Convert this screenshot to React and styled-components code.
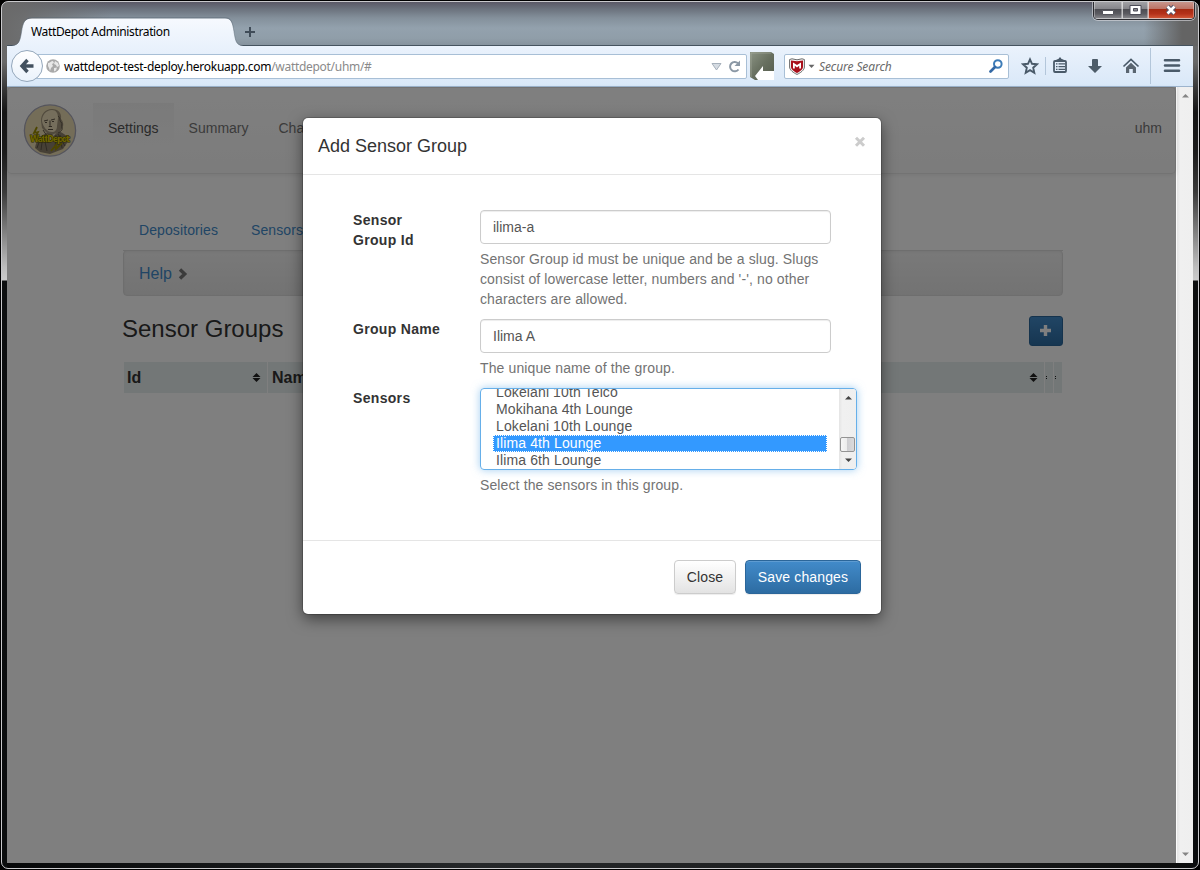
import React from "react";
import styled, { createGlobalStyle, css } from "styled-components";

const GlobalStyle = createGlobalStyle`
  *, *::before, *::after { box-sizing: border-box; }
  body { margin: 0; background: #000; overflow: hidden; }
`;

const sans = `"Liberation Sans", Arial, sans-serif`;
const chromeFont = `"Noto Sans", "Open Sans", sans-serif`;

/* ---------- window frame ---------- */

const Desktop = styled.div`
  width: 1200px;
  height: 870px;
  padding: 1px;
  background: #000;
  font-family: ${sans};
  font-size: 14px;
  line-height: 20px;
  color: #333;
`;

const sideGlass = `linear-gradient(180deg, #6b6b6b 0, #686868 60px, #3a3a3a 85px, #151515 110px, #1c1c1c 150px, #3a3a3a 190px, #bdbdbd 265px, #cbcbcb 278px, #0d0f10 279px, #0b0d0e 100%)`;

const Frame = styled.div`
  display: flex;
  flex-direction: column;
  width: 1198px;
  height: 868px;
  padding: 0 5px 5px;
  border: 1px solid #c9c9cc;
  border-radius: 7px;
  overflow: hidden;
  background:
    linear-gradient(90deg, rgba(106, 106, 106, 1) 0, rgba(106, 106, 106, 0.9) 20px, rgba(106, 106, 106, 0) 110px, rgba(106, 106, 106, 0) 1142px, rgba(100, 100, 100, 1) 1180px) 0 0 / 100% 44px no-repeat,
    linear-gradient(180deg, #5a5966 0, #6b727d 7px, #84909b 16px, #93a1ad 26px, #909ea9 36px, #84919c 44px) 0 0 / 100% 44px no-repeat,
    ${sideGlass} 0 0 / 5px 100% no-repeat,
    ${sideGlass} 100% 0 / 5px 100% no-repeat,
    linear-gradient(90deg, #060708, #26282a 40%, #1a1b1c 80%, #0b0c0c);
`;

const TitleBar = styled.div`
  display: flex;
  height: 44px;
  flex: none;
  align-items: flex-end;
  border-bottom: 1px solid #45535f;
`;

const Tab = styled.div`
  position: relative;
  width: 231px;
  height: 29px;
  margin: 0 0 -1px 5px;
  padding: 5px 0 0 19px;
  font: 12px/20px ${chromeFont};
  letter-spacing: -0.36px;
  color: #000;
`;

const TabShape = styled.svg`
  position: absolute;
  inset: 0;
`;

const TabTitle = styled.span`
  position: relative;
  white-space: nowrap;
`;

const NewTab = styled.svg`
  margin: 0 0 7px 1px;
`;

const WindowControls = styled.div`
  display: flex;
  align-self: flex-start;
  height: 19px;
  margin: -1px -2px 0 auto;
  border: 1px solid #2b2b30;
  border-top: 0;
  border-radius: 0 0 5px 5px;
  box-shadow: 0 0 0 1px rgba(220, 220, 225, 0.6);
  overflow: hidden;
`;

const ControlButton = styled.div`
  display: flex;
  align-items: center;
  justify-content: center;
  width: ${(p) => p.$w}px;
  border: 1px solid rgba(255, 255, 255, 0.35);
  border-top: 0;
  background: ${(p) =>
    p.$close
      ? "linear-gradient(180deg, #c99b92 0, #bd7466 45%, #a62a12 50%, #b4311a 75%, #cf5536 100%)"
      : "linear-gradient(180deg, #a5a5a9 0, #86868b 45%, #4d4d53 50%, #5b5b61 75%, #85858a 100%)"};
  & + & { border-left-color: rgba(240, 240, 240, 0.7); }
`;

/* ---------- toolbar ---------- */

const Toolbar = styled.div`
  display: flex;
  align-items: center;
  flex: none;
  height: 41px;
  padding-left: 4px;
  border-bottom: 1px solid #9db4cd;
  background: linear-gradient(180deg, #eaf2fc 0, #e2edfa 50%, #d9e8f8 100%);
`;

const BackButton = styled.div`
  position: relative;
  display: flex;
  align-items: center;
  justify-content: center;
  width: 32px;
  height: 32px;
  border: 1px solid #94a7bb;
  border-radius: 50%;
  background: linear-gradient(180deg, #fff, #eaf2fb);
`;

const Field = styled.div`
  display: flex;
  align-items: center;
  height: 25px;
  border: 1px solid #a8bfd6;
  border-radius: 2px;
  background: #fff;
  font: 12px/22px ${chromeFont};
  white-space: nowrap;
`;

const UrlField = styled(Field)`
  width: 712px;
  margin-left: -8px;
  padding: 0 5px 0 10px;
`;

const Url = styled.span`
  flex: 1;
  margin: 2px 0 0 4px;
  letter-spacing: -0.3px;
  color: #8a8a8a;
  b {
    font-weight: 400;
    letter-spacing: -0.26px;
    color: #000;
  }
`;

const SearchField = styled(Field)`
  width: 225px;
  margin-left: 10px;
  padding: 0 5px 0 4px;
`;

const SearchHint = styled.span`
  flex: 1;
  margin: 2px 0 0 4px;
  font-style: italic;
  letter-spacing: -0.1px;
  color: #6a6a6a;
`;

const Icon = styled.svg`
  display: block;
  flex: none;
  margin-left: ${(p) => p.$ml || 0}px;
`;

const Separator = styled.div`
  width: 1px;
  height: ${(p) => p.$h}px;
  margin-left: ${(p) => p.$ml}px;
  background: #b3c6da;
`;

/* ---------- web page ---------- */

const Viewport = styled.div`
  display: flex;
  height: 776px;
`;

const Page = styled.div`
  position: relative;
  width: 1169px;
  background: #fff;
`;

const Navbar = styled.div`
  display: flex;
  align-items: center;
  height: 87px;
  padding: 0 13px 0 15px;
  border: 1px solid #e7e7e7;
  border-radius: 4px;
  background: linear-gradient(180deg, #fff, #f8f8f8);
  box-shadow: 0 1px 5px rgba(0, 0, 0, 0.075);
`;

const NavItem = styled.div`
  padding: 15px;
  margin: 0 0 5px;
  margin-left: ${(p) => (p.$right ? "auto" : p.$first ? "16px" : "0")};
  padding-right: ${(p) => (p.$right ? 0 : 15)}px;
  color: ${(p) => (p.$active ? "#555" : "#777")};
  ${(p) =>
    p.$active &&
    css`
      background: linear-gradient(180deg, #f5f5f5, #fbfbfb);
    `}
`;

const Container = styled.div`
  width: 940px;
  margin: 36px 0 0 116px;
`;

const Tabs = styled.div`
  display: flex;
  height: 41px;
  border-bottom: 1px solid #ddd;
  letter-spacing: 0.1px;
`;

const TabLink = styled.div`
  padding: 10px 17px 10px 16px;
  margin-left: ${(p) => p.$ml || 0}px;
  color: #428bca;
`;

const Well = styled.div`
  display: flex;
  align-items: center;
  gap: 6px;
  height: 46px;
  margin-top: -1px;
  padding: 1px 15px 0;
  border: 1px solid #dcdcdc;
  border-radius: 4px;
  background: linear-gradient(180deg, #f3f3f3, #e6e6e6);
  box-shadow: inset 0 1px 3px rgba(0, 0, 0, 0.05);
  font-size: 16px;
  color: #428bca;
`;

const SectionHead = styled.div`
  display: flex;
  align-items: center;
  justify-content: space-between;
  height: 30px;
  margin-top: 20px;
`;

const Heading = styled.h3`
  margin: 0 0 4px -1px;
  font-size: 24px;
  font-weight: 400;
  line-height: 26px;
`;

const AddButton = styled.div`
  display: flex;
  align-items: center;
  justify-content: center;
  width: 34px;
  height: 30px;
  border: 1px solid #2b669a;
  border-radius: 3px;
  background: linear-gradient(180deg, #428bca, #2d6ca2);
`;

const HeaderRow = styled.div`
  display: grid;
  grid-template-columns: 143px 776px 8px 8px;
  gap: 0 1px;
  height: 31px;
  margin: 16px 1px 0;
`;

const HeaderCell = styled.div`
  display: flex;
  align-items: center;
  justify-content: space-between;
  padding: ${(p) => (p.$narrow ? "0 0 0 1px" : "0 6px 0 4px")};
  background: #e6eeee;
  font-size: 16px;
  font-weight: 700;
  &:first-child { padding-left: 3px; }
`;

/* ---------- modal ---------- */

const Backdrop = styled.div`
  position: absolute;
  inset: 0;
  display: flex;
  justify-content: center;
  align-items: flex-start;
  padding: 31px 0 0 1px;
  background: rgba(0, 0, 0, 0.5);
`;

const Modal = styled.div`
  width: 578px;
  height: 496px;
  border-radius: 5px;
  background: #fff;
  box-shadow: 0 0 0 1px rgba(0, 0, 0, 0.18), 0 5px 15px rgba(0, 0, 0, 0.5);
`;

const ModalHeader = styled.div`
  display: flex;
  justify-content: space-between;
  height: 57px;
  padding: 15px 15px 0;
  border-bottom: 1px solid #e5e5e5;
  font-size: 18px;
  line-height: 26px;
`;

const ModalBody = styled.div`
  height: 365px;
  padding: 35px 24px 0 50px;
`;

const FormRow = styled.div`
  display: grid;
  grid-template-columns: 97px 377px;
  column-gap: 30px;
`;

const Label = styled.label`
  padding-right: ${(p) => (p.$wrap ? 30 : 0)}px;
  font-weight: 700;
  letter-spacing: 0.32px;
`;

const Input = styled.input`
  display: block;
  width: 351px;
  height: 34px;
  padding: 6px 12px;
  border: 1px solid #ccc;
  border-radius: 4px;
  outline: 0;
  font: 14px/20px ${sans};
  color: #555;
  box-shadow: inset 0 1px 1px rgba(0, 0, 0, 0.075);
`;

const HelpText = styled.p`
  width: 351px;
  margin: 5px 0 10px;
  letter-spacing: 0.12px;
  color: #737373;
`;

const ListBox = styled.div`
  display: flex;
  width: 377px;
  height: 82px;
  border: 1px solid #66afe9;
  border-radius: 4px;
  overflow: hidden;
  box-shadow: 0 0 8px rgba(102, 175, 233, 0.6);
`;

const Options = styled.div`
  display: flex;
  flex-direction: column;
  justify-content: flex-end;
  width: 358px;
  padding: 0 12px 0 12px;
  letter-spacing: 0.12px;
  overflow: hidden;
`;

const Option = styled.div`
  flex: none;
  height: 17px;
  padding-left: 3px;
  line-height: 17px;
  color: ${(p) => (p.$selected ? "#fff" : "#555")};
  background: ${(p) => (p.$selected ? "#3399ff" : "transparent")};
  outline: ${(p) => (p.$selected ? "1px dotted #fff" : "0")};
  outline-offset: -1px;
`;

const ScrollTrack = styled.div`
  display: flex;
  flex-direction: column;
  align-items: center;
  width: 17px;
  background: linear-gradient(90deg, #e4e4e4, #f0f0f0 20%, #efefef);
`;

const ListScroll = styled(ScrollTrack)`
  padding: 6px 0 6px 1px;
  justify-content: space-between;
`;

const PageScroll = styled(ScrollTrack)`
  padding: 6px 0 6px;
  border-left: 1px solid #fafafa;
  justify-content: space-between;
`;

const Thumb = styled.div`
  width: 15px;
  height: 15px;
  margin: 30px 1px 0 0;
  border: 1px solid #939393;
  border-radius: 2px;
  background: linear-gradient(90deg, #f6f6f6 0, #ececec 45%, #cfcfd2 50%, #dadadc 100%);
`;

const ModalFooter = styled.div`
  display: flex;
  justify-content: flex-end;
  gap: 9px;
  padding: 19px 20px 0;
  border-top: 1px solid #e5e5e5;
`;

const Button = styled.button`
  width: ${(p) => p.$w}px;
  height: 34px;
  padding: 0;
  border: 1px solid ${(p) => (p.$primary ? "#2b669a" : "#ccc")};
  border-radius: 4px;
  background: ${(p) =>
    p.$primary ? "linear-gradient(180deg, #428bca, #2d6ca2)" : "linear-gradient(180deg, #fff, #e3e3e3)"};
  box-shadow: inset 0 1px 0 rgba(255, 255, 255, 0.15), 0 1px 1px rgba(0, 0, 0, 0.075);
  font: 14px/20px ${sans};
  letter-spacing: 0.13px;
  color: ${(p) => (p.$primary ? "#fff" : "#333")};
`;

/* ---------- drawings ---------- */

const Arrow = ({ down, color = "#444" }) => (
  <Icon width="9" height="5" viewBox="0 0 9 5">
    <path d={down ? "M1 .5h7L4.5 4z" : "M1 4.5h7L4.5 1z"} fill={color} />
  </Icon>
);

const SortIcon = () => (
  <svg width="9" height="9" viewBox="0 0 9 9">
    <path d="M4.500 0 8.500 4h-8zM.5 5h8l-4 4z" fill="#222" />
  </svg>
);

const SortStub = () => (
  <svg width="2" height="5" viewBox="0 0 2 5">
    <path d="M0 1h1v1H0zM0 3h1v1H0z" fill="#222" />
  </svg>
);

const Logo = () => (
  <Icon width="54" height="54" viewBox="0 0 54 54">
    <circle cx="27" cy="26.500" r="25.600" fill="#e9dab1" stroke="#a9a9b8" strokeWidth="1.300" />
    <path d="M12 44c1-8 6-13 12-15l11-2c5 2 9 4 11 9l-6 9-13 5-10-2z" fill="#8c816b" />
    <path d="M18 17c0-7 4-12 11-12 6 0 10 4 9 10 3 3 3 8 0 11l-5 5-9-2-5-5z" fill="#a2957b" />
    <path d="M19 17c0-6 4-11 10-11 4 0 6 3 6 8l-1 8c0 4-2 6-5 6-5 0-9-5-10-11z" fill="#eadcb8" />
    <path d="m21 17 4-1m3 0 4-1M22 18.500h2m5-1h2m-4-1v5l-1 1h3m-4 3h5" stroke="#5e5545" fill="none" />
    <path d="M35 12c3 2 1 4 3 6s0 4 1 6-2 4-4 5M20 26l4 6 5-1M18 33l-4 11m6-13-2 15m3-13 3 14m11-17 7 12M33 31l-1 13m5-13 2 13" stroke="#5f5647" fill="none" />
    <path d="m24 30 3 7 6-8-4 2z" fill="#eadcb8" />
    <path d="m14 23-3 6 4-1-3 6m27 5-6 6v-4l-5 6" stroke="#9b8c00" strokeWidth="1.800" fill="none" />
    <text x="7" y="38" textLength="40" fontFamily="DejaVu Sans, sans-serif" fontSize="8.500" fontWeight="700" fill="#dccb00" stroke="#5a5200" strokeWidth="1" paintOrder="stroke">WattDepot</text>
  </Icon>
);

const ink = "#4a5a69";

export default function App() {
  return (
    <Desktop>
      <GlobalStyle />
      <Frame>
        <TitleBar>
          <Tab>
            <TabShape width="231" height="29" viewBox="0 0 231 29">
              <defs>
                <linearGradient id="tab" x1="0" y1="0" x2="0" y2="1">
                  <stop offset="0" stopColor="#f6f9fe" />
                  <stop offset="1" stopColor="#eaf2fc" />
                </linearGradient>
              </defs>
              <path d="M0 29C7 28.500 8 24 9.500 15 11 5 13 1.500 20 1.500H213c6 0 7.500 4 9 13 1.500 9 2 14 9 14.500z" fill="url(#tab)" />
              <path d="M0 28.500C7 28 8 24 9.500 15 11 5 13 .7 20 .7H213c6 0 7.500 4 9 14 1.500 9 2 13.500 9 13.800" fill="none" stroke="#596875" strokeWidth=".7" opacity=".7" />
            </TabShape>
            <TabTitle>WattDepot Administration</TabTitle>
          </Tab>
          <NewTab width="12" height="12" viewBox="0 0 12 12">
            <path d="M6 1v10M1 6h10" stroke="#404c58" strokeWidth="2" />
          </NewTab>
          <WindowControls>
            <ControlButton $w={28}>
              <svg width="12" height="12" viewBox="0 0 12 12">
                <path d="M.5 6.500h11v4H.5z" fill="#fff" stroke="#55555d" />
              </svg>
            </ControlButton>
            <ControlButton $w={26}>
              <svg width="13" height="12" viewBox="0 0 13 12">
                <path d="M1 1.500h11v9H1z" fill="#fff" stroke="#4d4d58" />
                <path d="M4.500 4.500h4v2.500h-4z" fill="#88888d" stroke="#4d4d58" />
              </svg>
            </ControlButton>
            <ControlButton $w={46} $close>
              <svg width="14" height="12" viewBox="0 0 14 12">
                <path d="m3.500 2.500 7 7m0-7-7 7" stroke="#56566a" strokeWidth="4.600" />
                <path d="m3.500 2.500 7 7m0-7-7 7" stroke="#fff" strokeWidth="2.600" />
              </svg>
            </ControlButton>
          </WindowControls>
        </TitleBar>

        <Toolbar>
          <BackButton>
            <svg width="16" height="16" viewBox="0 0 16 16">
              <path d="M8.500 2 3 8l5.500 6M3 8h11.500" fill="none" stroke="#43515f" strokeWidth="3.400" />
            </svg>
          </BackButton>
          <UrlField>
            <Icon width="14" height="14" viewBox="0 0 14 14">
              <circle cx="7" cy="7" r="6.800" fill="#a9a9a9" />
              <path d="M2 4c2 0 3-2 5-2l1 2-2 1 1 2-2 2-1 3-1-3-1-2zM9 2l3 2 1 3-2 1-1-2-2-1zM8 9l3-.5-1 3-2 1z" fill="#e8e8e8" />
            </Icon>
            <Url>
              <b>wattdepot-test-deploy.herokuapp.com</b>/wattdepot/uhm/#
            </Url>
            <Icon width="11" height="9" viewBox="0 0 11 9">
              <path d="M1 1.500h9L5.500 8z" fill="#d5dbe2" stroke="#a6b0bb" />
            </Icon>
            <Icon $ml={6} width="13" height="13" viewBox="0 0 13 13">
              <path d="M10 3.200A4.700 4.700 0 1 0 10.500 9.500" fill="none" stroke="#8b98a5" strokeWidth="2" />
              <path d="M12 .5V6H6.500z" fill="#8b98a5" />
            </Icon>
          </UrlField>
          <Icon $ml={3} width="24" height="28" viewBox="0 0 24 28">
            <defs>
              <linearGradient id="ext" x1="0" y1="0" x2="1" y2="1">
                <stop offset="0" stopColor="#8b9384" />
                <stop offset=".5" stopColor="#687060" />
                <stop offset="1" stopColor="#525a4b" />
              </linearGradient>
            </defs>
            <path d="M0 0h21l3 2v26H5l-5-3z" fill="url(#ext)" />
            <path d="M1 25V1H21" fill="none" stroke="#a3ab9b" strokeWidth=".7" />
            <path d="M5 24 13 14v5h11v9H8z" fill="#fff" />
          </Icon>
          <SearchField>
            <Icon width="16" height="17" viewBox="0 0 16 17">
              <path d="M.6 1.500 3 .8l5 1 5-1 2.400.7V9c0 3-4 6-7.400 7.400C4.600 15 .6 12 .6 9z" fill="#f4f4f4" stroke="#6c6c6c" />
              <path d="M2 2.500 8 3.200l6-.7V9c0 2.300-3 4.600-6 6-3-1.400-6-3.700-6-6z" fill="#a80f1a" />
              <path d="M4 10.500V4.500L8 7l4-2.500v6h-1.800V7.800L8 9.500 5.800 7.800v2.700z" fill="#fff" />
            </Icon>
            <Icon $ml={3} width="7" height="5" viewBox="0 0 7 5">
              <path d="M.5.8h6L3.500 4z" fill="#666" />
            </Icon>
            <SearchHint>Secure Search</SearchHint>
            <Icon width="14" height="14" viewBox="0 0 14 14">
              <circle cx="8.800" cy="5" r="3.800" fill="none" stroke="#3d7cb8" strokeWidth="2" />
              <path d="M6 8 1.500 12.500" stroke="#3469a5" strokeWidth="2.700" strokeLinecap="round" />
            </Icon>
          </SearchField>
          <Icon $ml={11} width="20" height="20" viewBox="0 0 20 20">
            <path d="m10 3.300 2 4.500 5 .5-3.800 3.400 1.100 5-4.300-2.600-4.300 2.600 1.100-5L3 8.300l5-.5z" fill="none" stroke={ink} strokeWidth="1.900" />
          </Icon>
          <Separator $ml={5} $h={18} />
          <Icon $ml={4} width="20" height="20" viewBox="0 0 20 20">
            <rect x="4" y="5" width="12" height="11" rx="1" fill="none" stroke={ink} strokeWidth="1.800" />
            <path d="M6.500 5V3.500l2-.5.8-1.500h1.400l.8 1.500 2 .5V5z" fill={ink} />
            <path d="M6 7.800h1.500m1 0H15M6 10.600h1.500m1 0H15M6 13.400h1.500m1 0H15" stroke={ink} strokeWidth="1.300" />
          </Icon>
          <Icon $ml={15} width="20" height="20" viewBox="0 0 20 20">
            <path d="M7 3.500 8 3h4l1 .5V10h4l-7 7-7-7h4z" fill="#4d5c69" />
          </Icon>
          <Icon $ml={16} width="20" height="20" viewBox="0 0 20 20">
            <path d="m2.500 10.500 7.500-7 7.500 7" fill="none" stroke={ink} strokeWidth="1.700" />
            <path d="M10 6.800l5 4.700V17h-3.200v-4H8.200v4H5v-5.500z" fill="#5a6570" />
          </Icon>
          <Separator $ml={9} $h={36} />
          <Icon $ml={11} width="20" height="20" viewBox="0 0 20 20">
            <path d="M3 4.200h14M3 9.500h14M3 14.800h14" stroke={ink} strokeWidth="2.600" strokeLinecap="round" />
          </Icon>
        </Toolbar>

        <Viewport>
          <Page>
            <Navbar>
              <Logo />
              <NavItem $active $first>Settings</NavItem>
              <NavItem>Summary</NavItem>
              <NavItem>Chart</NavItem>
              <NavItem $right>uhm</NavItem>
            </Navbar>
            <Container>
              <Tabs>
                <TabLink>Depositories</TabLink>
                <TabLink>Sensors</TabLink>
                <TabLink $ml={361}>Definitions</TabLink>
              </Tabs>
              <Well>
                Help
                <svg width="10" height="12" viewBox="0 0 10 12">
                  <path d="m2 1.500 4.700 4.500L2 10.500" fill="none" stroke="#777" strokeWidth="3.400" />
                </svg>
              </Well>
              <SectionHead>
                <Heading>Sensor Groups</Heading>
                <AddButton>
                  <svg width="14" height="14" viewBox="0 0 14 14">
                    <path d="M6.500 1v11M1 6.500h11" stroke="#fff" strokeWidth="3.400" />
                  </svg>
                </AddButton>
              </SectionHead>
              <HeaderRow>
                <HeaderCell>Id<SortIcon /></HeaderCell>
                <HeaderCell>Name<SortIcon /></HeaderCell>
                <HeaderCell $narrow><SortStub /></HeaderCell>
                <HeaderCell $narrow><SortStub /></HeaderCell>
              </HeaderRow>
            </Container>

            <Backdrop>
              <Modal>
                <ModalHeader>
                  Add Sensor Group
                  <Icon width="12" height="18" viewBox="0 0 12 18">
                    <path d="m2 4.800 8 8m0-8-8 8" stroke="#ccc" strokeWidth="3" />
                  </Icon>
                </ModalHeader>
                <ModalBody>
                  <FormRow>
                    <Label $wrap>Sensor Group Id</Label>
                    <div>
                      <Input defaultValue="ilima-a" />
                      <HelpText>
                        Sensor Group id must be unique and be a slug. Slugs consist of lowercase letter, numbers and '-', no other characters are allowed.
                      </HelpText>
                    </div>
                  </FormRow>
                  <FormRow>
                    <Label>Group Name</Label>
                    <div>
                      <Input defaultValue="Ilima A" />
                      <HelpText>The unique name of the group.</HelpText>
                    </div>
                  </FormRow>
                  <FormRow>
                    <Label>Sensors</Label>
                    <div>
                      <ListBox>
                        <Options>
                          <Option>Lokelani 10th Telco</Option>
                          <Option>Mokihana 4th Lounge</Option>
                          <Option>Lokelani 10th Lounge</Option>
                          <Option $selected>Ilima 4th Lounge</Option>
                          <Option>Ilima 6th Lounge</Option>
                        </Options>
                        <ListScroll>
                          <Arrow />
                          <Thumb />
                          <Arrow down />
                        </ListScroll>
                      </ListBox>
                      <HelpText>Select the sensors in this group.</HelpText>
                    </div>
                  </FormRow>
                </ModalBody>
                <ModalFooter>
                  <Button $w={62}>Close</Button>
                  <Button $w={116} $primary>Save changes</Button>
                </ModalFooter>
              </Modal>
            </Backdrop>
          </Page>
          <PageScroll>
            <Arrow color="#858585" />
            <Arrow down color="#858585" />
          </PageScroll>
        </Viewport>
      </Frame>
    </Desktop>
  );
}
